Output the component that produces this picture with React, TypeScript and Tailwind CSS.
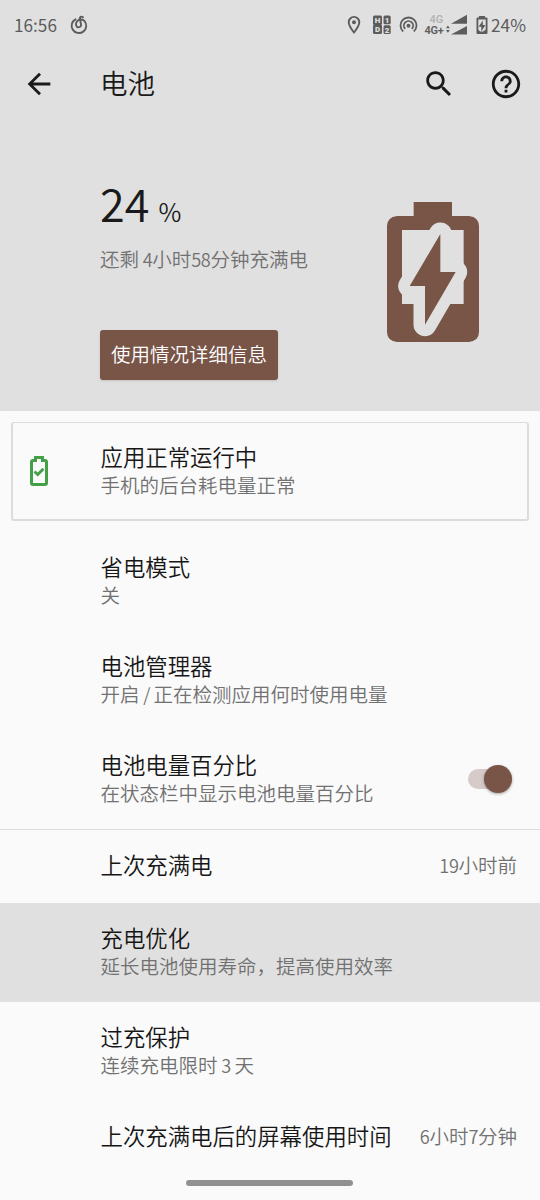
import type { ReactNode } from "react";

type SettingRowProps = {
  title: string;
  summary?: string;
  value?: string;
  highlighted?: boolean;
  children?: ReactNode;
};

// Latin characters and digits are set a little narrower than the Chinese text
const MixedText = ({ text }: { text: string }) => {
  return (
    <>
      {text.split(/([0-9/ ]+)/).map((part, index) =>
        index % 2 === 1 ? (
          <span key={index} className="text-[18.200px] tracking-[-0.400px]">
            {part}
          </span>
        ) : (
          part
        ),
      )}
    </>
  );
};

const StatusBar = () => {
  return (
    <div className="flex h-[50px] items-center justify-between pr-[14px] pl-[14px] text-[#5c5c5c]">
      <div className="flex items-center gap-[13px]">
        <span className="text-[17.200px] leading-none">16:56</span>
        <svg
          width="18"
          height="20"
          viewBox="0 0 18 20"
          fill="none"
          stroke="currentColor"
          strokeWidth="1.900"
          strokeLinecap="round"
        >
          <path d="M5.500 4.300A7.300 7.300 0 1 0 14.500 6C12.500 3.900 9 4.200 7.200 6.200C5 8.700 6 12.300 8.600 12.400C10.800 12.400 11.400 10.400 10.900 8.500L9.800 4C9.300 1.800 11.500 1 13 2.200" />
        </svg>
      </div>

      <div className="flex items-center">
        <svg width="14" height="20" viewBox="0 0 14 20" fill="none" stroke="currentColor">
          <path
            d="M7 17.500C4.300 14 1.700 10.500 1.700 7.200A5.300 5.300 0 0 1 12.300 7.200C12.300 10.500 9.700 14 7 17.500Z"
            strokeWidth="1.900"
          />
          <circle cx="7" cy="7.200" r="2" fill="currentColor" stroke="none" />
        </svg>

        <svg className="ml-[12px]" width="18" height="20" viewBox="0 0 18 20">
          <rect x="0" y="0.500" width="9" height="9.500" rx="1.500" fill="currentColor" />
          <rect x="0" y="9.500" width="9" height="9.500" rx="1.500" fill="currentColor" />
          <rect x="10.500" y="0.500" width="7.200" height="8.800" rx="1.500" fill="currentColor" />
          <rect x="10.500" y="10.300" width="7.200" height="8.800" rx="1.500" fill="currentColor" />
          <g fill="#e0e0e0" fontFamily="Roboto, sans-serif" fontSize="8" fontWeight="900" textAnchor="middle">
            <text x="4.500" y="7.900">H</text>
            <text x="4.500" y="17.400">D</text>
            <text x="14" y="7.900">1</text>
            <text x="14" y="17.500">2</text>
          </g>
        </svg>

        <svg
          className="ml-[8px]"
          width="19"
          height="18"
          viewBox="0 0 19 18"
          fill="none"
          stroke="currentColor"
          strokeWidth="1.800"
        >
          <path d="M4.200 15.500A8 8 0 1 1 14.800 15.500" />
          <path d="M6.200 12.900A4.600 4.600 0 1 1 12.800 12.900" />
          <circle cx="9.500" cy="9.800" r="2" fill="currentColor" stroke="none" />
        </svg>

        <div className="ml-[7px] flex w-[21px] flex-col font-[Roboto,sans-serif] text-[11px] leading-[11px] font-semibold">
          <span className="pl-[5px] text-[#b4b4b4]">4G</span>
          <span className="tracking-[-0.3px]">4G+</span>
        </div>
        <svg width="22" height="22" viewBox="0 0 22 22" fill="currentColor">
          <path d="M0 14.300L1.900 11.500L3.800 14.300Z M0 16L1.900 18.800L3.800 16Z" />
          <path d="M5 9.800L21 0.800V9.800Z" />
          <path d="M5 20.500L21 12V20.500Z" />
        </svg>

        <svg className="ml-[8.5px]" width="12" height="20" viewBox="0 0 12 20">
          <path
            d="M3 1H9V2.500H10.500Q11.500 2.500 11.500 3.500V18Q11.500 19 10.500 19H1.500Q0.500 19 0.500 18V3.500Q0.500 2.500 1.500 2.500H3Z"
            fill="currentColor"
          />
          <path d="M2.300 4.500H9.700V14.500L7.200 16.500H4L2.300 14.500Z" fill="#e0e0e0" />
          <path d="M6.800 5.500L2.600 11.700H5.300V16.500L9.500 10H6.800Z" fill="currentColor" />
        </svg>
        <span className="ml-[3px] text-[17.200px] leading-none">24%</span>
      </div>
    </div>
  );
};

const AppBar = () => {
  return (
    <div className="flex h-[67px] items-center pr-[17px] pl-[22px] text-[#1a1a1a]">
      <svg width="34" height="34" viewBox="0 0 24 24" fill="currentColor">
        <path d="M20 11H7.830l5.590-5.590L12 4l-8 8 8 8 1.410-1.410L7.830 13H20v-2z" />
      </svg>
      <h1 className="mb-[2px] ml-[44px] flex-1 text-[27.500px] leading-none font-[350]">电池</h1>
      <svg width="34" height="34" viewBox="0 0 24 24" fill="currentColor">
        <path d="M15.500 14h-.790l-.280-.270C15.410 12.590 16 11.110 16 9.500 16 5.910 13.090 3 9.500 3S3 5.910 3 9.500 5.910 16 9.500 16c1.610 0 3.090-.590 4.230-1.570l.270.280v.790l5 4.990L20.490 19l-4.990-5zm-6 0C7.010 14 5 11.990 5 9.500S7.010 5 9.500 5 14 7.010 14 9.500 11.990 14 9.500 14z" />
      </svg>
      <svg className="ml-[33px]" width="34" height="34" viewBox="0 0 24 24" fill="currentColor">
        <path d="M11 18h2v-2h-2v2zm1-16C6.480 2 2 6.480 2 12s4.480 10 10 10 10-4.480 10-10S17.520 2 12 2zm0 18c-4.410 0-8-3.590-8-8s3.590-8 8-8 8 3.590 8 8-3.590 8-8 8zm0-14c-2.210 0-4 1.790-4 4h2c0-1.100.900-2 2-2s2 .900 2 2c0 2-3 1.750-3 5h2c0-2.250 3-2.500 3-5 0-2.210-1.790-4-4-4z" />
      </svg>
    </div>
  );
};

const ChargingBattery = () => {
  return (
    <svg width="92" height="140" viewBox="51 36 276 420">
      <path d="M131 36H246V78H297Q327 82 327 108V426Q327 452 297 456H81Q51 452 51 426V108Q51 82 81 78H131Z" fill="#795548" />
      <path d="M96 120H281V342H96Z" fill="#e0e0e0" />
      <path
        d="M211 132L119 288H165V404L257 246H211Z"
        fill="#e0e0e0"
        stroke="#e0e0e0"
        strokeWidth="69"
        strokeLinejoin="round"
      />
      <path d="M211 132L119 288H165V404L257 246H211Z" fill="#795548" />
    </svg>
  );
};

const BatteryHeader = () => {
  return (
    <header className="h-[411px] bg-[#e0e0e0]">
      <StatusBar />
      <AppBar />
      <div className="flex justify-between pr-[61px] pl-[100px]">
        <div className="pt-[60px]">
          <p className="flex h-[52px] items-baseline gap-[9px] leading-[52px] font-[350] text-[#1a1a1a]">
            <span className="text-[45px]">24</span>
            <span className="text-[25px]">%</span>
          </p>
          <p className="mt-[16px] h-[28px] text-[19.500px] leading-[28px] font-[350] text-[#717171]">
            <MixedText text="还剩 4小时58分钟充满电" />
          </p>
          <button className="mt-[57px] h-[50px] w-[178px] rounded-[3px] bg-[#795548] pb-[2px] text-[19.500px] font-[350] whitespace-nowrap text-white shadow-sm">
            使用情况详细信息
          </button>
        </div>
        <div className="pt-[85px]">
          <ChargingBattery />
        </div>
      </div>
    </header>
  );
};

const RowText = ({ title, summary }: { title: string; summary?: string }) => {
  return (
    <div className={`flex-1 font-[350] whitespace-nowrap ${summary ? "pb-[4px]" : "pb-[6px]"}`}>
      <p className="h-[28px] text-[22.400px] leading-[28px] text-[#161616]">{title}</p>
      {summary && (
        <p className="h-[28px] text-[19.500px] leading-[30px] text-[#717171]">
          <MixedText text={summary} />
        </p>
      )}
    </div>
  );
};

const SettingRow = ({ title, summary, value, highlighted, children }: SettingRowProps) => {
  return (
    <div
      className={`flex items-center pr-[23px] pl-[100.5px] ${
        summary ? "h-[99px]" : "h-[73px]"
      } ${highlighted ? "bg-[#e0e0e0]" : ""}`}
    >
      <RowText title={title} summary={summary} />
      {value && (
        <span className="pb-[3px] text-[19.500px] leading-none font-[350] text-[#717171]">
          <MixedText text={value} />
        </span>
      )}
      {children}
    </div>
  );
};

const Switch = () => {
  return (
    <div className="mr-[5px] mb-[2px] flex h-5 w-[44px] items-center justify-end rounded-full bg-[#d6cbc8]">
      <div className="size-[28px] shrink-0 rounded-full bg-[#795548] shadow-[0_1px_3px_rgba(0,0,0,0.35)]" />
    </div>
  );
};

const App = () => {
  return (
    <div className="h-[1200px] w-[540px] overflow-hidden bg-[#fafafa] font-['Noto_Sans_CJK_SC',sans-serif]">
      <BatteryHeader />

      {/* Battery tip */}
      <div className="mx-[11px] mt-[11px] mb-[11px] flex h-[99px] items-center rounded-[3px] border-2 border-t border-[#dcdcdc] pl-[17px]">
        <svg className="mb-[1px]" width="18" height="30" viewBox="0 0 18 30" fill="none" stroke="#43a047">
          <path
            d="M5.500 1.500H12.500V4.500H15Q16.500 4.500 16.500 6V27Q16.500 28.500 15 28.500H3Q1.500 28.500 1.500 27V6Q1.500 4.500 3 4.500H5.500Z"
            strokeWidth="3"
          />
          <path d="M4.500 15.500L7.700 18.500L13.500 12.700" strokeWidth="2.800" />
        </svg>
        <div className="ml-[52.5px] pt-[1px]">
          <RowText title="应用正常运行中" summary="手机的后台耗电量正常" />
        </div>
      </div>

      <SettingRow title="省电模式" summary="关" />
      <SettingRow title="电池管理器" summary="开启 / 正在检测应用何时使用电量" />
      <SettingRow title="电池电量百分比" summary="在状态栏中显示电池电量百分比">
        <Switch />
      </SettingRow>

      <div className="border-t border-[#dcdcdc]">
        <SettingRow title="上次充满电" value="19小时前" />
        <SettingRow title="充电优化" summary="延长电池使用寿命，提高使用效率" highlighted />
        <SettingRow title="过充保护" summary="连续充电限时 3 天" />
        <SettingRow title="上次充满电后的屏幕使用时间" value="6小时7分钟" />
      </div>

      {/* Gesture bar */}
      <div className="mt-[6px] ml-[186px] h-[6px] w-[167px] rounded-full bg-[#919191]" />
    </div>
  );
};

export default App;
